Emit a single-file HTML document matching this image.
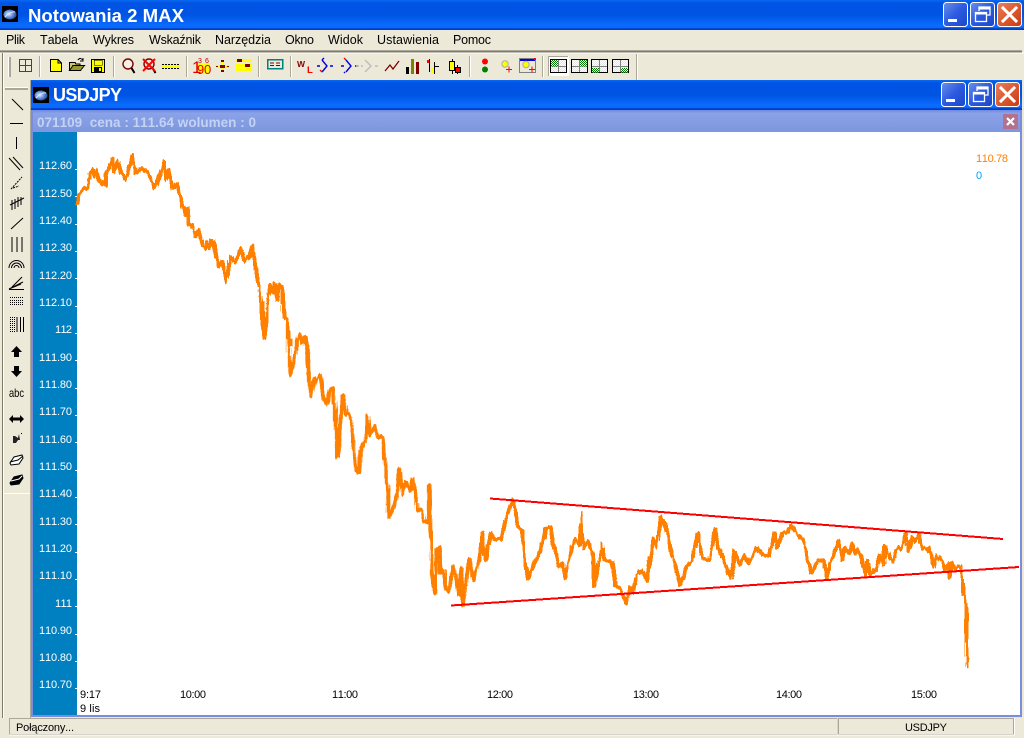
<!DOCTYPE html>
<html lang="pl"><head><meta charset="utf-8"><title>Notowania 2 MAX</title>
<style>
html,body{margin:0;padding:0;background:#ECE9D8;width:1024px;height:738px;overflow:hidden}
svg{display:block;position:absolute;left:0;top:0}
text{font-family:"Liberation Sans",sans-serif;font-kerning:none;white-space:pre}
.m{font-size:12.5px;fill:#000}
.a{font-size:11px;fill:#fff;text-anchor:end}
.t{font-size:11px;fill:#000}
</style></head><body>
<svg width="1024" height="738" viewBox="0 0 1024 738" xmlns="http://www.w3.org/2000/svg">
<defs>
<linearGradient id="tb" x1="0" y1="0" x2="0" y2="1">
<stop offset="0" stop-color="#0a6af0"/><stop offset=".1" stop-color="#0053e4"/><stop offset=".5" stop-color="#0054e3"/><stop offset=".85" stop-color="#0a6cff"/><stop offset=".92" stop-color="#0b68f8"/><stop offset=".96" stop-color="#003dc8"/><stop offset="1" stop-color="#003dc8"/>
</linearGradient>
<linearGradient id="sub" x1="0" y1="0" x2="0" y2="1">
<stop offset="0" stop-color="#6f8ae0"/><stop offset=".15" stop-color="#8aa2e6"/><stop offset="1" stop-color="#7d97e0"/>
</linearGradient>
<linearGradient id="bb" x1="0" y1="0" x2="1" y2="1">
<stop offset="0" stop-color="#6a90ec"/><stop offset=".5" stop-color="#2c5ae0"/><stop offset="1" stop-color="#1b45c8"/>
</linearGradient>
<linearGradient id="rb" x1="0" y1="0" x2="1" y2="1">
<stop offset="0" stop-color="#e8825f"/><stop offset=".5" stop-color="#dc5a30"/><stop offset="1" stop-color="#c53a12"/>
</linearGradient>
<radialGradient id="ball" cx=".4" cy=".45" r=".6"><stop offset="0" stop-color="#e8eeff"/><stop offset=".6" stop-color="#5a8ad8"/><stop offset="1" stop-color="#244a90"/></radialGradient>
<pattern id="gd" width="2" height="2" patternUnits="userSpaceOnUse"><rect width="2" height="2" fill="#fff"/><rect width="1" height="1" fill="#008000"/><rect x="1" y="1" width="1" height="1" fill="#008000"/></pattern>
<pattern id="wd" width="2" height="2" patternUnits="userSpaceOnUse"><rect width="2" height="2" fill="#fff"/><rect width="1" height="1" fill="#e4e4e4"/><rect x="1" y="1" width="1" height="1" fill="#e4e4e4"/></pattern>
<filter id="jit" filterUnits="userSpaceOnUse" x="70" y="130" width="920" height="560" color-interpolation-filters="sRGB">
<feTurbulence type="fractalNoise" baseFrequency=".35 .03" numOctaves="2" seed="4" result="n"/>
<feDisplacementMap in="SourceGraphic" in2="n" scale="5" xChannelSelector="R" yChannelSelector="G"/>
</filter>
<g id="appi"><rect width="16" height="16" fill="#000"/><ellipse cx="8" cy="8.5" rx="6.5" ry="5" fill="url(#ball)"/><path d="M3 11 Q8 5 13 6" stroke="#dfe8ff" stroke-width="1" fill="none"/></g>
<g id="bmin"><rect x=".5" y=".5" width="24" height="24" rx="3" fill="url(#bb)" stroke="#fff"/><rect x="5" y="17" width="9" height="3" fill="#fff"/></g>
<g id="bres"><rect x=".5" y=".5" width="24" height="24" rx="3" fill="url(#bb)" stroke="#fff"/><path d="M9 9V5h11v8h-3" fill="none" stroke="#fff" stroke-width="1.3"/><rect x="9" y="5" width="11" height="2.5" fill="#fff"/><rect x="5.5" y="10.5" width="11" height="9" fill="none" stroke="#fff" stroke-width="1.3"/><rect x="5" y="10" width="12" height="2.5" fill="#fff"/></g>
<g id="bclo"><rect x=".5" y=".5" width="24" height="24" rx="3" fill="url(#rb)" stroke="#fff"/><path d="M6 6 19 19M19 6 6 19" stroke="#fff" stroke-width="3" stroke-linecap="square"/></g>
<g id="quad"><rect x=".5" y=".5" width="16" height="13" fill="url(#wd)"/><path d="M.5 7.500H16.500M8.500 .5V13.500" stroke="#808080"/><rect x=".5" y=".5" width="16" height="13" fill="none" stroke="#000"/></g>
</defs>

<!-- frame -->
<rect width="1024" height="738" fill="#ECE9D8"/>
<rect width="1024" height="30" fill="url(#tb)"/>
<use href="#appi" x="2" y="6"/>
<text x="28" y="22" font-size="18" font-weight="bold" fill="#fff" textLength="156" lengthAdjust="spacingAndGlyphs">Notowania 2 MAX</text>
<use href="#bmin" x="943" y="2"/><use href="#bres" x="970" y="2"/><use href="#bclo" x="997" y="2"/>

<!-- menu -->
<g class="menu">
<text class="m" x="6" y="44" textLength="19">Plik</text>
<text class="m" x="40" y="44" textLength="38">Tabela</text>
<text class="m" x="93" y="44" textLength="41">Wykres</text>
<text class="m" x="149" y="44" textLength="52">Wskaźnik</text>
<text class="m" x="215" y="44" textLength="56">Narzędzia</text>
<text class="m" x="285" y="44" textLength="29">Okno</text>
<text class="m" x="328" y="44" textLength="35">Widok</text>
<text class="m" x="377" y="44" textLength="62">Ustawienia</text>
<text class="m" x="453" y="44" textLength="38">Pomoc</text>
</g>

<!-- top toolbar -->
<rect x="0" y="50" width="1022" height="1" fill="#aca899"/>
<rect x="0" y="51" width="1022" height="1.5" fill="#807c6c"/>
<rect x="0" y="52.5" width="1024" height="1" fill="#fff"/>
<rect x="636" y="54" width="1" height="26" fill="#aca899"/>
<rect x="637" y="54" width="1" height="26" fill="#fff"/>
<rect x="8" y="57" width="1" height="20" fill="#fff"/><rect x="9" y="57" width="2" height="20" fill="#aca899"/>
<g fill="#aca899">
<rect x="39" y="56" width="1" height="21"/><rect x="113" y="56" width="1" height="21"/><rect x="186" y="56" width="1" height="21"/><rect x="258" y="56" width="1" height="21"/><rect x="290" y="56" width="1" height="21"/><rect x="469" y="56" width="1" height="21"/><rect x="542" y="56" width="1" height="21"/>
</g>
<g fill="#fff">
<rect x="40" y="56" width="1" height="21"/><rect x="114" y="56" width="1" height="21"/><rect x="187" y="56" width="1" height="21"/><rect x="259" y="56" width="1" height="21"/><rect x="291" y="56" width="1" height="21"/><rect x="470" y="56" width="1" height="21"/><rect x="543" y="56" width="1" height="21"/>
</g>

<!-- toolbar icons -->
<g shape-rendering="crispEdges">
<rect x="19.500" y="59.500" width="12" height="12" fill="none" stroke="#444"/><path d="M25.500 60V71M20 65.500H31" stroke="#444"/>
<path d="M50.500 59.500H58L61.500 63V71.500H50.500Z" fill="#ff0" stroke="#000"/><path d="M58 60V63H61" fill="none" stroke="#000"/>
<path d="M69.500 70.500V62.500H75L76 64H80V66" fill="#cccc66" stroke="#000"/><path d="M69.500 70.500L73 65.500H84.500L80.500 70.500Z" fill="#999933" stroke="#000"/><path d="M78 60Q80 57 83 60M83 58V61H80" fill="none" stroke="#000"/>
<rect x="91.500" y="59.500" width="13" height="13" fill="#ff0" stroke="#000"/><rect x="94" y="60" width="8" height="5" fill="#ff0" stroke="#000" stroke-width=".5"/><rect x="94" y="67" width="8" height="6" fill="#000"/><rect x="99" y="68" width="2" height="3" fill="#ff0"/>
</g>
<circle cx="128" cy="64" r="5" fill="#fff" fill-opacity=".4" stroke="#800000" stroke-width="1.4"/><path d="M131.500 68 134.500 73" stroke="#000" stroke-width="2"/>
<circle cx="149" cy="64" r="5" fill="none" stroke="#800000" stroke-width="1.4"/><path d="M152.500 68 155.500 73" stroke="#000" stroke-width="2"/><path d="M143 59 155 71M155 59 143 71" stroke="#f00" stroke-width="2"/>
<g shape-rendering="crispEdges">
<rect x="162" y="65" width="18" height="3" fill="#ff0"/><path d="M162 64.500H180M162 68.500H180" stroke="#000" stroke-dasharray="2 1"/>
</g>
<rect x="198" y="63" width="5" height="11" fill="#ff0"/><rect x="204" y="63" width="6" height="11" fill="#ff0"/>
<text x="192" y="73" font-size="17" fill="#e00000">1</text>
<text x="198" y="63" font-size="7" fill="#c00000">3</text><text x="205" y="63" font-size="7" fill="#c00000">6</text>
<text x="197" y="74" font-size="13" fill="#e00000">9</text><text x="204" y="74" font-size="13" fill="#e00000">0</text>
<g shape-rendering="crispEdges">
<rect x="216" y="65" width="13" height="3" fill="#ff0"/><rect x="221" y="60" width="3" height="12" fill="#ff0"/><rect x="220" y="65" width="5" height="3" fill="#800000"/><rect x="221" y="60" width="3" height="2" fill="#800000"/><rect x="221" y="70" width="3" height="2" fill="#800000"/><rect x="216" y="66" width="2" height="1" fill="#800000"/><rect x="227" y="66" width="2" height="1" fill="#800000"/>
<rect x="236" y="59" width="16" height="3" fill="#ff0"/><rect x="236" y="64" width="16" height="3" fill="#ff0"/><rect x="236" y="68" width="16" height="3" fill="#ff0"/><rect x="237" y="59" width="5" height="3" fill="#800000"/><rect x="245" y="64" width="5" height="3" fill="#800000"/><rect x="241" y="68" width="4" height="3" fill="#ff0"/>
<rect x="267.500" y="59.500" width="15" height="9" fill="#ece9d8" stroke="#008080" stroke-width="1.5"/><path d="M270 63H274M276 63H280M270 65.500H274M276 65.500H280" stroke="#800000"/>
</g>
<text x="297" y="67" font-size="8.500" font-weight="bold" fill="#800000">W</text><text x="307" y="73" font-size="9.500" font-weight="bold" fill="#f00">L</text>
<g fill="none" stroke-width="1.400">
<path d="M322 60 327 66 322 72" stroke="#0000e0"/><path d="M317 66H320M330 66H333" stroke="#0000e0"/><path d="M322 72 320 70" stroke="#f00"/><path d="M322 60l2-2" stroke="#0000e0"/>
<path d="M346 60 351 66 346 72" stroke="#0000e0"/><path d="M341 66H344M355 66H358" stroke="#0000e0"/><path d="M346 60 344 58" stroke="#f00"/><path d="M345 72l-1 1" stroke="#0000e0"/>
<path d="M365 60 371 66 365 72" stroke="#bbb"/><path d="M356 66H359M361 66H363M375 66H378" stroke="#bbb"/>
<path d="M385 71 390 65 393 69 399 61" stroke="#800000" stroke-width="1.300"/>
</g>
<g shape-rendering="crispEdges">
<rect x="406" y="67" width="3" height="7" fill="#000"/><rect x="411" y="59" width="3" height="15" fill="#808000"/><rect x="416" y="62" width="3" height="12" fill="#800000"/>
<rect x="429" y="59" width="1" height="13" fill="#000"/><rect x="427" y="60" width="2" height="3" fill="#f00"/><rect x="434" y="62" width="1" height="12" fill="#000"/><rect x="435" y="66" width="4" height="1" fill="#000"/><rect x="431" y="68" width="3" height="5" fill="#ff0"/>
<rect x="452" y="59" width="1" height="15" fill="#000"/><rect x="449.500" y="61.500" width="5" height="9" fill="#ff0" stroke="#000"/><rect x="457" y="65" width="1" height="9" fill="#000"/><rect x="455.500" y="67.500" width="5" height="5" fill="#f00" stroke="#000"/>
</g>
<circle cx="485" cy="61.500" r="3" fill="#f00"/><circle cx="485" cy="69.500" r="3" fill="#008000"/>
<circle cx="505" cy="64" r="3.200" fill="#ff0" stroke="#aaa"/><path d="M506 69.500H512M509 66.500V72.500" stroke="#f00"/>
<g shape-rendering="crispEdges">
<rect x="519.500" y="58.500" width="16" height="14" fill="#ece9d8" stroke="#808080"/><rect x="520" y="59" width="15" height="2" fill="#0000e0"/><rect x="534" y="58" width="2" height="2" fill="#f00"/><path d="M529 69.500H535M532 66.500V72.500" stroke="#f00"/>
</g>
<circle cx="526" cy="64.500" r="3.200" fill="#ff0" stroke="#aaa"/>
<rect x="548" y="56" width="21" height="20" fill="#fff"/><path d="M548.500 76V56.500H568" fill="none" stroke="#aca899"/>
<g shape-rendering="crispEdges">
<use href="#quad" x="550" y="59"/><rect x="551" y="60" width="7" height="6.500" fill="url(#gd)"/>
<use href="#quad" x="571" y="59"/><rect x="580" y="60" width="7" height="6.500" fill="url(#gd)"/>
<use href="#quad" x="591" y="59"/><rect x="592" y="68" width="7" height="4.500" fill="url(#gd)"/>
<use href="#quad" x="612" y="59"/><rect x="621" y="68" width="7" height="4.500" fill="url(#gd)"/>
</g>

<!-- left toolbar -->
<rect x="2" y="53" width="1" height="665" fill="#807c6c"/>
<rect x="3" y="53" width="1" height="665" fill="#fff"/>
<rect x="5" y="87" width="23" height="1" fill="#fff"/><rect x="5" y="88" width="23" height="2" fill="#aca899"/>
<rect x="30" y="80" width="1" height="638" fill="#aca899"/>
<rect x="4" y="493" width="26" height="1" fill="#fff"/>
<g stroke="#000" fill="none" stroke-width="1">
<path d="M12 99 23 110"/>
<path d="M10 123.500H23" shape-rendering="crispEdges"/>
<path d="M16.500 137V149" shape-rendering="crispEdges"/>
<path d="M9 158 20 170M13 157 23 168"/>
<path d="M11 189 22 177M13 188 19 186" stroke-dasharray="2 1"/>
<path d="M10 205 24 198M12 210V200M15 209V199M18 207V197M21 205V197"/>
<path d="M11 229 23 218"/>
<path d="M12 237V252M17 237V252M22 237V252" stroke-width="1" shape-rendering="crispEdges"/>
<path d="M9 268A7.500 7.500 0 0 1 24 268M11.500 268A5 5 0 0 1 21.500 268M14 268A2.500 2.500 0 0 1 19 268"/>
<path d="M9 289.500H24M9 289 23 282M9 289 21 284M12 287 22 277"/>
<path d="M10 297.500H24M10 300.500H24M10 302.500H24M10 304.500H24" stroke-dasharray="1 1" shape-rendering="crispEdges"/>
<path d="M10.500 317V332M12.500 317V332M14.500 317V332" stroke-dasharray="1 1" shape-rendering="crispEdges"/>
<path d="M17 317V332M20.500 317V332M23.500 317V332" shape-rendering="crispEdges"/>
</g>
<path d="M16.500 346 22 352H19V357H14V352H11Z" fill="#000"/>
<path d="M16.500 377 22 371H19V366H14V371H11Z" fill="#000"/>
<text x="9" y="397" font-size="12" fill="#000" textLength="15" lengthAdjust="spacingAndGlyphs">abc</text>
<path d="M9 419 13 415V417.500H20V415L24 419 20 423V420.500H13V423Z" fill="#000"/>
<path d="M13 443V436H15L18 438 19 434 20 440H18L16 443Z" fill="#222"/><rect x="21" y="433" width="1" height="1" fill="#000"/>
<path d="M10 463 14 457 22 455 23 458 19 464 11 465Z" fill="#fff" stroke="#000"/><path d="M10 462 18 460 23 456" stroke="#000" fill="none"/>
<path d="M10 483 14 477 22 475 23 478 19 484 11 485Z" fill="#000" stroke="#000"/><path d="M11 481 19 479 22 476" stroke="#fff" fill="none"/>

<!-- child window -->
<rect x="31" y="80" width="991" height="637" fill="#7b8cdc"/>
<rect x="31" y="80" width="991" height="30" fill="url(#tb)"/>
<use href="#appi" x="33" y="87"/>
<text x="53" y="101" font-size="18" font-weight="bold" fill="#fff" textLength="69">USDJPY</text>
<use href="#bmin" x="941" y="82"/><use href="#bres" x="968" y="82"/><use href="#bclo" x="995" y="82"/>
<rect x="33" y="110" width="987" height="22" fill="url(#sub)"/>
<text x="37" y="127" font-size="13.500" font-weight="bold" fill="#c4d2f4" textLength="219">071109  cena : 111.64 wolumen : 0</text>
<rect x="1003" y="114" width="15" height="15" rx="1" fill="#b3718e"/><path d="M1007 118 1014 125M1014 118 1007 125" stroke="#fff" stroke-width="2.200"/>

<!-- chart -->
<rect x="33" y="132" width="987" height="583" fill="#fff"/>
<rect x="33" y="132" width="44" height="583" fill="#0080c0"/>
<g>
<text class="a" x="72" y="169" textLength="33">112.60</text>
<text class="a" x="72" y="197" textLength="33">112.50</text>
<text class="a" x="72" y="224" textLength="33">112.40</text>
<text class="a" x="72" y="251" textLength="33">112.30</text>
<text class="a" x="72" y="279" textLength="33">112.20</text>
<text class="a" x="72" y="306" textLength="33">112.10</text>
<text class="a" x="72" y="333" textLength="17">112</text>
<text class="a" x="72" y="361" textLength="33">111.90</text>
<text class="a" x="72" y="388" textLength="33">111.80</text>
<text class="a" x="72" y="415" textLength="33">111.70</text>
<text class="a" x="72" y="443" textLength="33">111.60</text>
<text class="a" x="72" y="470" textLength="33">111.50</text>
<text class="a" x="72" y="497" textLength="33">111.40</text>
<text class="a" x="72" y="525" textLength="33">111.30</text>
<text class="a" x="72" y="552" textLength="33">111.20</text>
<text class="a" x="72" y="579" textLength="33">111.10</text>
<text class="a" x="72" y="607" textLength="17">111</text>
<text class="a" x="72" y="634" textLength="33">110.90</text>
<text class="a" x="72" y="661" textLength="33">110.80</text>
<text class="a" x="72" y="688" textLength="33">110.70</text>
</g>
<g fill="#fff" shape-rendering="crispEdges">
<rect x="75" y="169" width="2" height="1"/><rect x="75" y="196" width="2" height="1"/><rect x="75" y="224" width="2" height="1"/><rect x="75" y="251" width="2" height="1"/><rect x="75" y="278" width="2" height="1"/><rect x="75" y="306" width="2" height="1"/><rect x="75" y="333" width="2" height="1"/><rect x="75" y="360" width="2" height="1"/><rect x="75" y="388" width="2" height="1"/><rect x="75" y="415" width="2" height="1"/><rect x="75" y="442" width="2" height="1"/><rect x="75" y="470" width="2" height="1"/><rect x="75" y="497" width="2" height="1"/><rect x="75" y="524" width="2" height="1"/><rect x="75" y="552" width="2" height="1"/><rect x="75" y="579" width="2" height="1"/><rect x="75" y="606" width="2" height="1"/><rect x="75" y="634" width="2" height="1"/><rect x="75" y="661" width="2" height="1"/><rect x="75" y="688" width="2" height="1"/>
</g>
<text class="t" x="80" y="698" textLength="21">9:17</text>
<text class="t" x="80" y="712" textLength="20">9 lis</text>
<text class="t" x="180" y="698" textLength="26">10:00</text>
<text class="t" x="332" y="698" textLength="26">11:00</text>
<text class="t" x="487" y="698" textLength="26">12:00</text>
<text class="t" x="633" y="698" textLength="26">13:00</text>
<text class="t" x="776" y="698" textLength="26">14:00</text>
<text class="t" x="911" y="698" textLength="26">15:00</text>
<text x="976" y="162" font-size="11" fill="#ff8000" textLength="32">110.78</text>
<text x="976" y="179" font-size="11" fill="#00a0ff">0</text>

<!-- price line -->
<g filter="url(#jit)">
<g fill="none" stroke="#ff8000" stroke-linejoin="round" stroke-linecap="round" shape-rendering="crispEdges">
<polyline transform="translate(76,145) scale(.33333)" stroke-width="11" points="5,175 10,145 25,130 38,125 42,85 50,75 55,95 62,75 70,105 80,120 88,120 85,90 98,70 110,42 115,78 125,50 135,85 145,105 152,90 170,32 178,85 198,68 215,85 238,130 250,98 265,50 270,105 278,75 290,130 302,118 318,170 328,210 334,190 338,240 348,238 358,275 368,255 378,300 388,310 392,288 400,310 410,285 420,320 428,365 440,350 450,410 465,335 478,350 495,310 505,350 522,335 532,300 540,390 550,420 555,470 565,580 575,490 582,415 592,445 598,415 605,465 610,415 620,430 625,515 635,520 640,600"/>
<polyline transform="translate(280,320) scale(.33333)" stroke-width="11" points="22,0 25,95 32,165 42,120 50,65 60,42 68,70 75,50 82,100 85,140 92,230 100,195 105,178 120,165 128,210 132,240 140,252 150,210 160,205 165,280 172,410 180,320 190,228 198,280 208,285 215,320 222,410 230,455 238,455 245,385 255,365 262,288 270,345 285,318 295,352 308,350 315,420 322,510 328,595 340,565 350,530 358,448 368,525 378,485 392,510 400,475 408,520 412,570 425,570 430,605 445,610 448,495 452,620 455,760 466,818 470,690 478,682 482,760 490,750 497,805 507,815 520,738 527,770 537,825 544,745 548,858 558,790 568,718 580,780 590,745 600,710"/>
<polyline transform="translate(420,480) scale(.33333)" stroke-width="11" points="180,240 187,158 197,240 212,160 225,178 245,178 260,105 278,60 295,140 305,150 318,260 325,295 345,245 360,210 378,145 392,140 400,190 415,260 428,250 436,295 445,245 465,180 478,195 484,100 490,205 505,185 520,230 523,320 535,255 545,190 555,240 575,245 585,320 600,325 618,370 630,320 640,340 650,285 665,270 682,300 700,175 712,200 722,110 740,150 760,235 780,312 800,258 815,245 835,160 848,235 868,240 885,148 900,220"/>
<polyline transform="translate(720,500) scale(.33333)" stroke-width="11" points="0,150 15,190 32,235 45,155 60,195 75,165 85,190 112,145 125,165 145,170 165,100 172,145 188,100 205,95 212,75 230,100 250,120 262,175 275,218 295,180 312,185 320,235 330,190 340,170 355,122 365,178 372,145 385,160 395,130 405,165 415,145 425,170 435,225 442,180 450,225 470,205 480,165 490,195 495,140 510,175 520,185 530,150 545,140 558,100 565,155 575,110 585,125 597,105 607,145 625,145 640,200 650,165 665,180 675,210 685,190 690,230 695,190 705,205 722,198 730,260 738,320 740,410 742,500"/>
</g>
</g>
<!-- trend lines -->
<g stroke="#f00" stroke-width="2" shape-rendering="crispEdges">
<path d="M490 498.500 1003 539"/>
<path d="M451 605.500 1019 567"/>
</g>

<!-- status bar -->
<rect x="9.500" y="718.500" width="828" height="16" fill="none" stroke="#aca899"/>
<path d="M9 735H838M838 718V735" stroke="#fff" fill="none"/>
<rect x="838.500" y="718.500" width="175" height="16" fill="none" stroke="#aca899"/>
<path d="M838 735H1014.500V718" stroke="#fff" fill="none"/>
<text class="t" x="16" y="731" textLength="58">Połączony...</text>
<text class="t" x="905" y="731" textLength="42">USDJPY</text>
</svg>
</body></html>
